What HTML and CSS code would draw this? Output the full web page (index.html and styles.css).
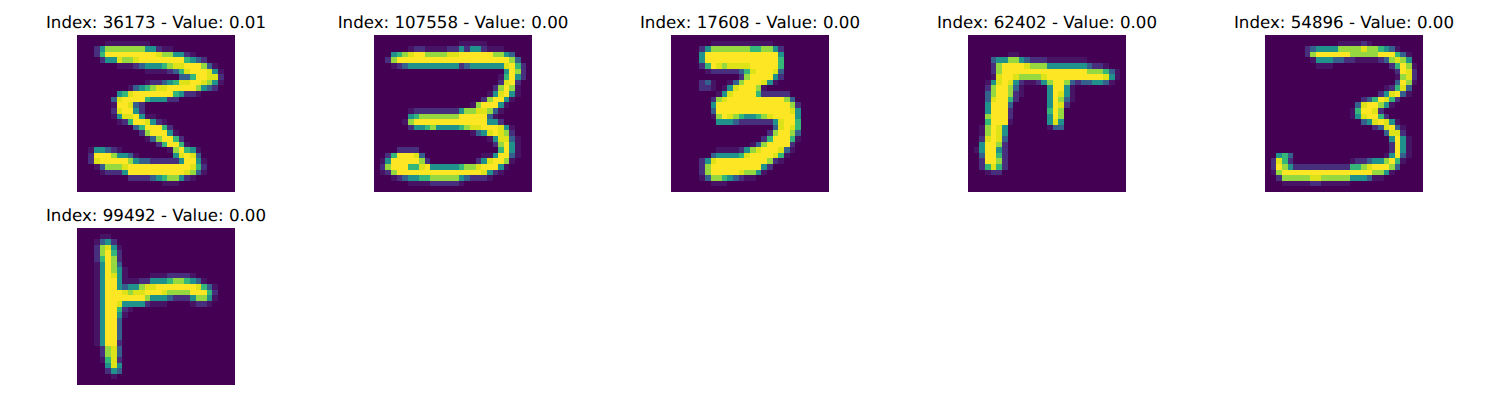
FILE: index.html
```html
<!DOCTYPE html>
<html lang="en">
<head>
<meta charset="utf-8">
<title>Top activations</title>
<link rel="stylesheet" href="styles.css">
</head>
<body>
<main class="figure">
  <section class="panel">
    <h2 class="panel-title">Index: 36173 - Value: 0.01</h2>
    <svg class="digit" viewBox="0 0 28 28" preserveAspectRatio="none" data-rows="|5:11111111|3:24666666644211|3:258888888887664421|4:2447667888888885432|7:111234445677888631|12:11112357888741|18:33588772|12:12234577887641|9:1345677888886432|7:457888888854221|6:378888544422|6:188732|6:278842|6:14778411|7:125887421|10:3588852|11:2688841|12:1368852|14:258851|2:14432100000000168541|2:28886443100000047873|2:278888864332222248841|3:13666788888888888752|4:1222488888888887631|9:222234566421|15:111|"></svg>
  </section>
  <section class="panel">
    <h2 class="panel-title">Index: 107558 - Value: 0.00</h2>
    <svg class="digit" viewBox="0 0 28 28" preserveAspectRatio="none" data-rows="|15:11111|6:12211112242442111|3:4567886666778888886643|2:268888888888888888888863|3:123444444444234444447852|23:4862|22:15842|22:2782|21:26861|20:147841|19:268841|17:1688841|6:12222222246677631|6:4566666668888831|5:168888888888888442|6:2445644445677888741|17:13478762|20:147731|21:26841|4:2222000000000000005841|2:258887300000000001148831|1:148888862000000002478861|1:26888557844444566788841|1:1268888888888888887421|3:123445566666432221|6:1111222221|"></svg>
  </section>
  <section class="panel">
    <h2 class="panel-title">Index: 17608 - Value: 0.00</h2>
    <svg class="digit" viewBox="0 0 28 28" preserveAspectRatio="none" data-rows="|7:11111111111|5:246666666556642|5:488888888888884|5:488888888888885|5:258767777888885|6:12222235788873|12:26888842|5:23100136888741|5:221014788861|8:1478888522222|7:267888888888863|7:4888888888888862|7:3888888888888874|7:1687654456788884|8:444322222247885|18:37875|17:268863|16:2588851|14:13688882|8:11112467888731|7:34444578888751|5:247888888888621|5:2688888888842|5:268888876641|5:1366543211|7:111|"></svg>
  </section>
  <section class="panel">
    <h2 class="panel-title">Index: 62402 - Value: 0.00</h2>
    <svg class="digit" viewBox="0 0 28 28" preserveAspectRatio="none" data-rows="|||7:11|4:34466432221111111|4:268888766644444443221|4:26888888888888888666531|4:17887666678888888888741|3:14787421124688632334431|3:2688631000048841|3:3688621000048741|3:3788520000048631|3:488830000004872|3:48882000000586|3:68882000000486|3:58881000000474|2:168740000000133|2:16874|2:27873|2:48862|1:148842|2:38852|2:28862|2:25752|3:122|||"></svg>
  </section>
  <section class="panel">
    <h2 class="panel-title">Index: 54896 - Value: 0.00</h2>
    <svg class="digit" viewBox="0 0 28 28" preserveAspectRatio="none" data-rows="|13:111121|7:23444466667665431|7:2688888866666888531|8:144433221111236764|9:111000000000025861|23:2872|23:1672|23:3861|21:12573|20:247831|17:2358752|16:3788641|15:158872|15:1478852|17:3478741|19:237831|21:3772|22:4841|22:2841|22:2841|2:453000000000000000014831|1:275200000000001223446851|1:28642222222222556788863|1:1688888888888888886641|2:2666667766666444311|3:111112211111|"></svg>
  </section>
  <section class="panel">
    <h2 class="panel-title">Index: 99492 - Value: 0.00</h2>
    <svg class="digit" viewBox="0 0 28 28" preserveAspectRatio="none" data-rows="|4:11|3:1342|3:26741|3:26852|3:25862|3:14863|3:148641|3:148741000011122221|3:14884111224445665431|3:1488434467788888887531|3:1488876778887666688852|3:1488888886444322246641|3:148874444211100001221|3:1488521|3:148841|3:14883|3:14883|3:14883|3:14883|3:14882|4:2673|4:2673|4:1572|5:474|5:243|6:1|"></svg>
  </section>
</main>
<script src="digits.js"></script>
</body>
</html>
```
FILE: styles.css
```css
html, body {
  margin: 0;
  background: #ffffff;
}

.figure {
  display: grid;
  grid-template-columns: repeat(5, 297px);
  justify-content: center;
  row-gap: 16px;
  padding-top: 15px;
  font-family: "DejaVu Sans", sans-serif;
}

.panel {
  display: flex;
  flex-direction: column;
  align-items: center;
}

.panel-title {
  margin: 0 0 4px;
  font-size: 16.67px;
  font-weight: 400;
  line-height: 16px;
  white-space: nowrap;
  color: #000000;
  text-rendering: geometricPrecision;
}

.digit {
  display: block;
  width: 158px;
  height: 157px;
  background: #440154;
}

.digit rect { shape-rendering: crispEdges; }
.v1 { fill: #471365; }
.v2 { fill: #472f7d; }
.v3 { fill: #35608d; }
.v4 { fill: #21918c; }
.v5 { fill: #35b779; }
.v6 { fill: #95d840; }
.v7 { fill: #dde318; }
.v8 { fill: #fde725; }
```
FILE: digits.js
```js
// Each svg carries its 28x28 image as rows "startColumn:levels", separated by "|".
var SVG_NS = "http://www.w3.org/2000/svg";

document.querySelectorAll(".digit").forEach(function (svg) {
  svg.dataset.rows.split("|").forEach(function (row, y) {
    if (!row) return;
    var parts = row.split(":");
    var start = parseInt(parts[0], 10);
    var levels = parts[1];
    for (var i = 0; i < levels.length; i++) {
      if (levels[i] === "0") continue;
      var cell = document.createElementNS(SVG_NS, "rect");
      cell.setAttribute("x", start + i);
      cell.setAttribute("y", y);
      cell.setAttribute("width", 1);
      cell.setAttribute("height", 1);
      cell.setAttribute("class", "v" + levels[i]);
      svg.appendChild(cell);
    }
  });
});
```
